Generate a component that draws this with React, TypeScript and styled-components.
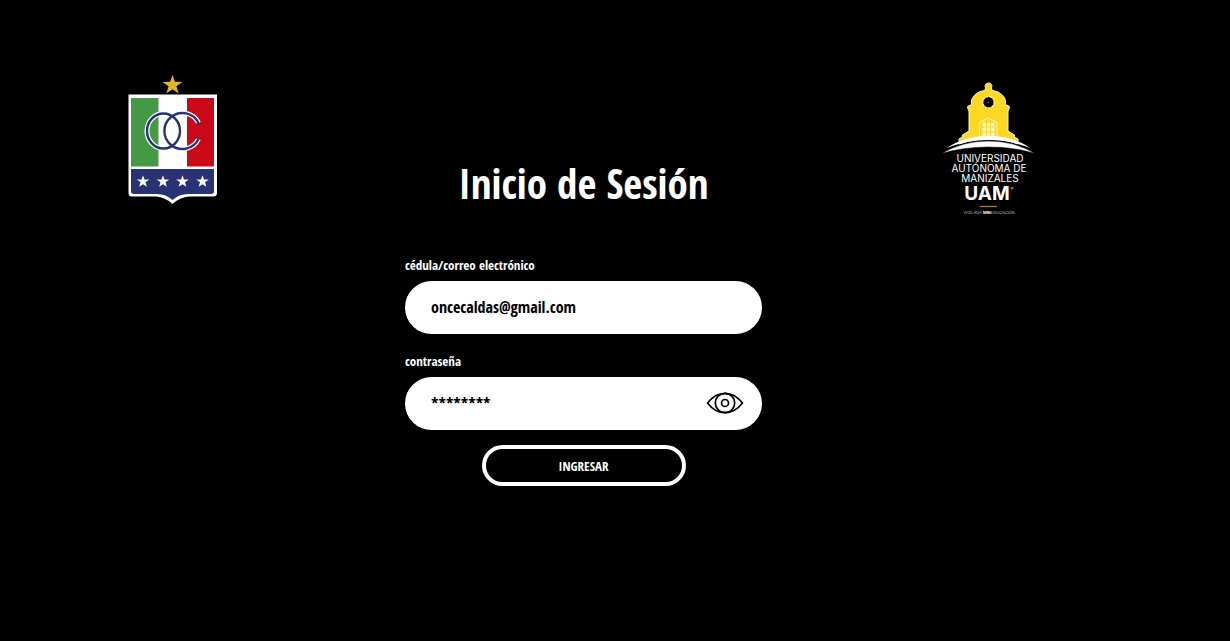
import React, { useState } from 'react';
import styled, { createGlobalStyle } from 'styled-components';

const GlobalStyle = createGlobalStyle`
  *, *::before, *::after { box-sizing: border-box; }
  body {
    margin: 0;
    background: #000;
    color: #fff;
    font-family: 'Open Sans Condensed', 'Roboto Condensed', 'Liberation Sans', sans-serif;
    font-weight: 700;
  }
`;

const Page = styled.main`
  display: flex;
  justify-content: space-between;
  align-items: flex-start;
  gap: 24px;
  min-height: 100vh;
  padding: 72px 195px 40px 128px;
`;

const Crest = styled.svg`
  flex: none;
  width: 97px;
  height: 134px;
`;

const University = styled.svg`
  flex: none;
  width: 93px;
  height: 136px;
  margin-top: 10px;
  font-family: 'Inter', 'Lato', sans-serif;
`;

const LoginForm = styled.form`
  flex: 0 1 357px;
  display: flex;
  flex-direction: column;
  align-items: center;
  gap: 15px;
  margin-top: 79px;
`;

const Title = styled.h1`
  margin: 0 0 23px;
  font-size: 41px;
  line-height: 64px;
  white-space: nowrap;
`;

const Field = styled.div`
  width: 100%;
  display: flex;
  flex-direction: column;
  gap: 4px;
`;

const Label = styled.label`
  font-size: 13px;
  line-height: 24px;
`;

const Pill = styled.div`
  display: flex;
  align-items: center;
  height: 53px;
  padding: 0 18px 0 26px;
  border-radius: 27px;
  background: #fff;
  color: #000;
`;

const Input = styled.input`
  flex: 1;
  min-width: 0;
  height: 100%;
  padding: 0 0 2px;
  border: 0;
  outline: 0;
  background: transparent;
  color: inherit;
  font: inherit;
  font-size: 16px;
`;

const EyeButton = styled.button`
  display: flex;
  padding: 0;
  border: 0;
  background: none;
  color: #000;
  cursor: pointer;
`;

const Submit = styled.button`
  width: 204px;
  height: 41px;
  padding: 0;
  border: 4px solid #fff;
  border-radius: 21px;
  background: #000;
  color: #fff;
  font: inherit;
  font-size: 13px;
  cursor: pointer;
`;

const STAR =
  'M0 -10 L2.4 -3.2 L10 -3.1 L3.9 1.2 L6.2 8.5 L0 4.2 L-6.2 8.5 L-3.9 1.2 L-10 -3.1 L-2.4 -3.2 Z';
const C_SHAPE = 'M70.5 51 A18 18 0 1 0 70.5 67';

function ClubCrest() {
  return (
    <Crest viewBox="0 0 97 134" role="img" aria-label="Once Caldas">
      <path
        d="M0.500 22.500 H89 V121 Q89 124.500 85 124.500 H61 Q52 125 44.500 132 Q37 125 28 124.500 H4 Q0.500 124.500 0.500 121 Z"
        fill="#fff"
      />
      <path d="M3 26 H30.500 V94.500 H3 Z" fill="#439a43" />
      <path d="M59 26 H86 V94.500 H59 Z" fill="#ca0817" />
      <path
        d="M3 97 H86 V119 Q86 122 83 122 H60 Q51 122 44.500 128 Q38 122 29 122 H6 Q3 122 3 119 Z"
        fill="#293272"
      />
      <g fill="none" stroke="#fff" strokeWidth="5">
        <ellipse cx="35.500" cy="59" rx="16.500" ry="17.500" />
        <path d={C_SHAPE} />
      </g>
      <g fill="none" stroke="#293272" strokeWidth="2.400">
        <ellipse cx="35.500" cy="59" rx="16.500" ry="17.500" />
        <path d={C_SHAPE} />
        <path d="M67.500 51.800 H73 M67.500 66.200 H73" strokeWidth="1" />
      </g>
      <path d={STAR} transform="translate(44.5 13)" fill="#e3b722" />
      {[15, 35, 54.5, 74.5].map((x) => (
        <path key={x} d={STAR} transform={`translate(${x} 109.5) scale(.63)`} fill="#fff" />
      ))}
    </Crest>
  );
}

function UniversityLogo() {
  return (
    <University viewBox="0 0 93 136" role="img" aria-label="Universidad Autónoma de Manizales">
      <path
        d="M46.500 1 C49.500 1 50.800 4 49.300 6 L50.500 8.500 C57 9.500 62 13 63.500 18.500 V22.500 L67.500 24.500 L67 27 L66 29 V49 L72.500 53 V55 L76 57 V62 Q60 56 46.500 56 Q32 56 17 62 V57 L20.500 55 V53 L27 49 V29 L26 27 L25.500 24.500 L29.500 22.500 V18.500 C31 13 36 9.500 42.500 8.500 L43.700 6 C42.200 4 43.500 1 46.500 1 Z"
        fill="#ffd823"
        stroke="#fff5c4"
        strokeWidth="1"
      />
      <circle cx="46.500" cy="20.300" r="5.200" fill="#000" />
      <circle cx="46.500" cy="20.300" r="5.800" fill="none" stroke="#fff5c4" strokeWidth="1.100" strokeDasharray="2 1.500" />
      <circle cx="46.500" cy="20.300" r="0.700" fill="#888" />
      <path d="M37.500 55 V40.500 L46.500 36 L55 40.500 V55 Z" fill="#ffd823" stroke="#fff5c4" strokeWidth="1" />
      <path d="M40.500 40.500 H52.500 V55 H40.500 Z" fill="#fff6d0" />
      <path d="M44.500 40 V56 M48.500 40 V56 M40 45 H53 M40 50 H53" stroke="#ffd823" strokeWidth="1" />
      <path d="M5 66 Q22 54 46.500 54 Q71 54 88 66 Q68 58 46.500 58 Q25 58 5 66 Z" fill="#fff" />
      <path
        d="M0 71.500 Q20 59 46.500 59 Q73 59 93 71.500 Q72 65 46.500 65 Q21 65 0 71.500 Z"
        fill="#fff"
        stroke="#000"
        strokeWidth="0.500"
      />
      <g fill="#fff" textAnchor="middle" fontWeight="400">
        <text x="48" y="80" fontSize="10">UNIVERSIDAD</text>
        <text x="47" y="90" fontSize="10">AUTÓNOMA DE</text>
        <text x="48" y="100" fontSize="10">MANIZALES</text>
        <text x="45" y="118" fontSize="19" fontWeight="700">UAM</text>
        <text x="70" y="108" fontSize="4">®</text>
        <text x="47" y="132" fontSize="4" fill="#bbb">
          VIGILADA <tspan fontWeight="700" fill="#fff">MIN</tspan>EDUCACIÓN
        </text>
      </g>
      <path d="M38 124.500 H55" stroke="#9c8424" strokeWidth="1.300" />
    </University>
  );
}

function EyeIcon() {
  return (
    <svg width="38" height="24" viewBox="0 0 38 24" fill="none" stroke="#000" strokeWidth="1.700" aria-hidden="true">
      <path d="M1.500 11 Q9 1.300 19 1.300 Q29 1.300 36.500 11 Q29 20.700 19 20.700 Q9 20.700 1.500 11 Z" strokeLinejoin="round" />
      <circle cx="19" cy="11" r="9.700" />
      <circle cx="19" cy="11" r="3.500" />
    </svg>
  );
}

export default function App() {
  const [user, setUser] = useState('oncecaldas@gmail.com');
  const [password, setPassword] = useState('********');

  return (
    <>
      <GlobalStyle />
      <Page>
        <ClubCrest />
        <LoginForm onSubmit={(e) => e.preventDefault()}>
          <Title>Inicio de Sesión</Title>
          <Field>
            <Label htmlFor="user">cédula/correo electrónico</Label>
            <Pill>
              <Input id="user" type="text" value={user} onChange={(e) => setUser(e.target.value)} />
            </Pill>
          </Field>
          <Field>
            <Label htmlFor="password">contraseña</Label>
            <Pill>
              <Input id="password" type="text" value={password} onChange={(e) => setPassword(e.target.value)} />
              <EyeButton type="button" aria-label="Mostrar contraseña">
                <EyeIcon />
              </EyeButton>
            </Pill>
          </Field>
          <Submit type="submit">INGRESAR</Submit>
        </LoginForm>
        <UniversityLogo />
      </Page>
    </>
  );
}
